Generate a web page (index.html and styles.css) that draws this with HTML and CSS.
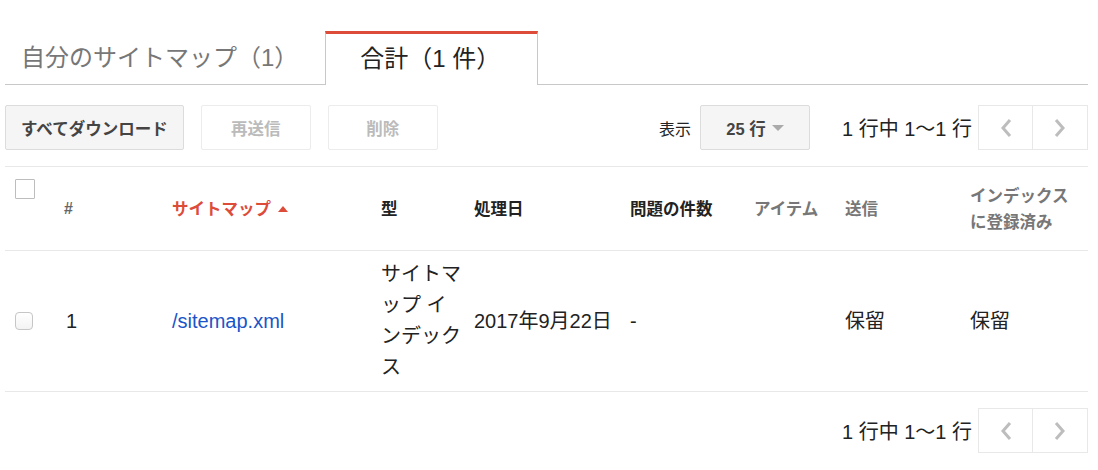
FILE: index.html
```html
<!DOCTYPE html>
<html lang="ja">
<head>
    <meta charset="UTF-8">
    <meta name="viewport" content="width=device-width, initial-scale=1.0">
    <title>サイトマップ</title>
    <link rel="stylesheet" href="styles.css">
</head>
<body>
    <div class="page">
        <div class="tabs">
            <div class="tab">自分のサイトマップ（1）</div>
            <div class="tab tab-active">合計（1 件）</div>
        </div>

        <div class="toolbar">
            <div class="actions">
                <button class="btn">すべてダウンロード</button>
                <button class="btn btn-disabled">再送信</button>
                <button class="btn btn-disabled">削除</button>
            </div>
            <div class="paging">
                <span class="rows-label">表示</span>
                <button class="btn btn-select">25 行<span class="caret"></span></button>
                <span class="range">1 行中 1〜1 行</span>
                <div class="pager">
                    <span class="pager-btn">
                        <svg width="12" height="20" viewBox="0 0 12 20"><polyline points="10,2 3,10 10,18" fill="none" stroke="#bdbdbd" stroke-width="3"/></svg>
                    </span>
                    <span class="pager-btn">
                        <svg width="12" height="20" viewBox="0 0 12 20"><polyline points="2,2 9,10 2,18" fill="none" stroke="#bdbdbd" stroke-width="3"/></svg>
                    </span>
                </div>
            </div>
        </div>

        <table class="sitemaps">
            <colgroup>
                <col style="width:51px">
                <col style="width:108px">
                <col style="width:209px">
                <col style="width:93px">
                <col style="width:156px">
                <col style="width:124px">
                <col style="width:91px">
                <col style="width:125px">
                <col style="width:126px">
            </colgroup>
            <thead>
                <tr>
                    <th class="col-check"><span class="check check-head"></span></th>
                    <th class="col-num">#</th>
                    <th class="sorted">サイトマップ<span class="sort-up"></span></th>
                    <th>型</th>
                    <th>処理日</th>
                    <th>問題の件数</th>
                    <th class="muted">アイテム</th>
                    <th class="muted">送信</th>
                    <th class="muted">インデックス<br>に登録済み</th>
                </tr>
            </thead>
            <tbody>
                <tr>
                    <td class="col-check"><span class="check"></span></td>
                    <td class="num">1</td>
                    <td><a href="#" class="link">/sitemap.xml</a></td>
                    <td>サイトマップ インデックス</td>
                    <td>2017年9月22日</td>
                    <td>-</td>
                    <td></td>
                    <td>保留</td>
                    <td>保留</td>
                </tr>
            </tbody>
        </table>

        <div class="footer">
            <span class="range">1 行中 1〜1 行</span>
            <div class="pager">
                <span class="pager-btn">
                    <svg width="12" height="20" viewBox="0 0 12 20"><polyline points="10,2 3,10 10,18" fill="none" stroke="#bdbdbd" stroke-width="3"/></svg>
                </span>
                <span class="pager-btn">
                    <svg width="12" height="20" viewBox="0 0 12 20"><polyline points="2,2 9,10 2,18" fill="none" stroke="#bdbdbd" stroke-width="3"/></svg>
                </span>
            </div>
        </div>
    </div>
</body>
</html>
```

FILE: styles.css
```css
body {
    margin: 0;
    background: #fff;
    color: #222;
    font-family: 'Liberation Sans', 'Noto Sans CJK JP', sans-serif;
}
.page {
    width: 1083px;
    padding: 31px 0 0 5px;
}
.tabs {
    display: flex;
    align-items: flex-end;
    border-bottom: 1px solid #c8c8c8;
    height: 53px;
}
.tab {
    font-size: 24px;
    color: #777;
    height: 53px;
    line-height: 53px;
    padding: 0 27px 0 16px;
    box-sizing: border-box;
}
.tab-active {
    color: #222;
    background: #fff;
    border: 1px solid #c8c8c8;
    border-top: 3px solid #dd4b39;
    border-bottom: none;
    height: 54px;
    line-height: 50px;
    margin-bottom: -1px;
    padding: 0 34px 0 34px;
    width: 213px;
}
.toolbar {
    display: flex;
    justify-content: space-between;
    align-items: center;
    margin-top: 20px;
    height: 45px;
}
.actions {
    display: flex;
    gap: 17px;
}
.btn {
    font-family: inherit;
    font-size: 16.5px;
    font-weight: bold;
    color: #444;
    height: 45px;
    min-width: 110px;
    padding: 0 15px;
    background: #f5f5f5;
    border: 1px solid #dcdcdc;
    border-radius: 2px;
    box-sizing: border-box;
}
.btn-disabled {
    background: #fff;
    border-color: #ececec;
    color: #bbb;
}
.paging, .footer {
    display: flex;
    align-items: center;
}
.footer {
    justify-content: flex-end;
    margin-top: 16px;
}
.rows-label {
    font-size: 16px;
    margin-right: 9px;
}
.btn-select {
    width: 110px;
    display: flex;
    align-items: center;
    justify-content: center;
}
.caret {
    display: inline-block;
    margin-left: 6px;
    border-left: 6px solid transparent;
    border-right: 6px solid transparent;
    border-top: 6px solid #aaa;
}
.range {
    font-size: 20px;
    margin-left: 32px;
    margin-right: 6px;
}
.footer .range {
    margin-left: 0;
}
.pager {
    display: flex;
}
.pager-btn {
    width: 55px;
    height: 45px;
    box-sizing: border-box;
    border: 1px solid #e8e8e8;
    display: flex;
    align-items: center;
    justify-content: center;
}
.pager-btn + .pager-btn {
    border-left: none;
}
.sitemaps {
    margin-top: 16px;
    width: 1083px;
    table-layout: fixed;
    border-collapse: collapse;
    border-top: 1px solid #e8e8e8;
}
.sitemaps th, .sitemaps td {
    padding: 0 4px 0 8px;
    text-align: left;
    vertical-align: middle;
}
.sitemaps th {
    height: 83px;
    font-size: 16.5px;
    font-weight: bold;
    line-height: 26px;
    color: #222;
    border-bottom: 1px solid #e8e8e8;
}
.sitemaps td {
    height: 140px;
    font-size: 20px;
    line-height: 31px;
    border-bottom: 1px solid #e8e8e8;
}
.sitemaps .col-check {
    padding-left: 10px;
}
.sitemaps th.col-check {
    vertical-align: top;
}
.sitemaps th.col-num {
    font-size: 16px;
    color: #666;
}
.sitemaps td.num {
    padding-left: 10px;
}
.sitemaps th.sorted {
    color: #dd4b39;
}
.sitemaps th.muted {
    color: #777;
}
.sort-up {
    display: inline-block;
    margin-left: 7px;
    vertical-align: 3px;
    border-left: 5px solid transparent;
    border-right: 5px solid transparent;
    border-bottom: 6px solid #dd4b39;
}
.check {
    display: block;
    width: 18px;
    height: 18px;
    box-sizing: border-box;
    border: 1px solid #c6c6c6;
    border-radius: 4px;
    background: linear-gradient(#fff, #f3f3f3);
}
.check-head {
    width: 20px;
    height: 20px;
    margin-top: 12px;
    border-radius: 1px;
    border-color: #bdbdbd;
    background: #fff;
}
.link {
    color: #1a55c8;
    text-decoration: none;
}
```
